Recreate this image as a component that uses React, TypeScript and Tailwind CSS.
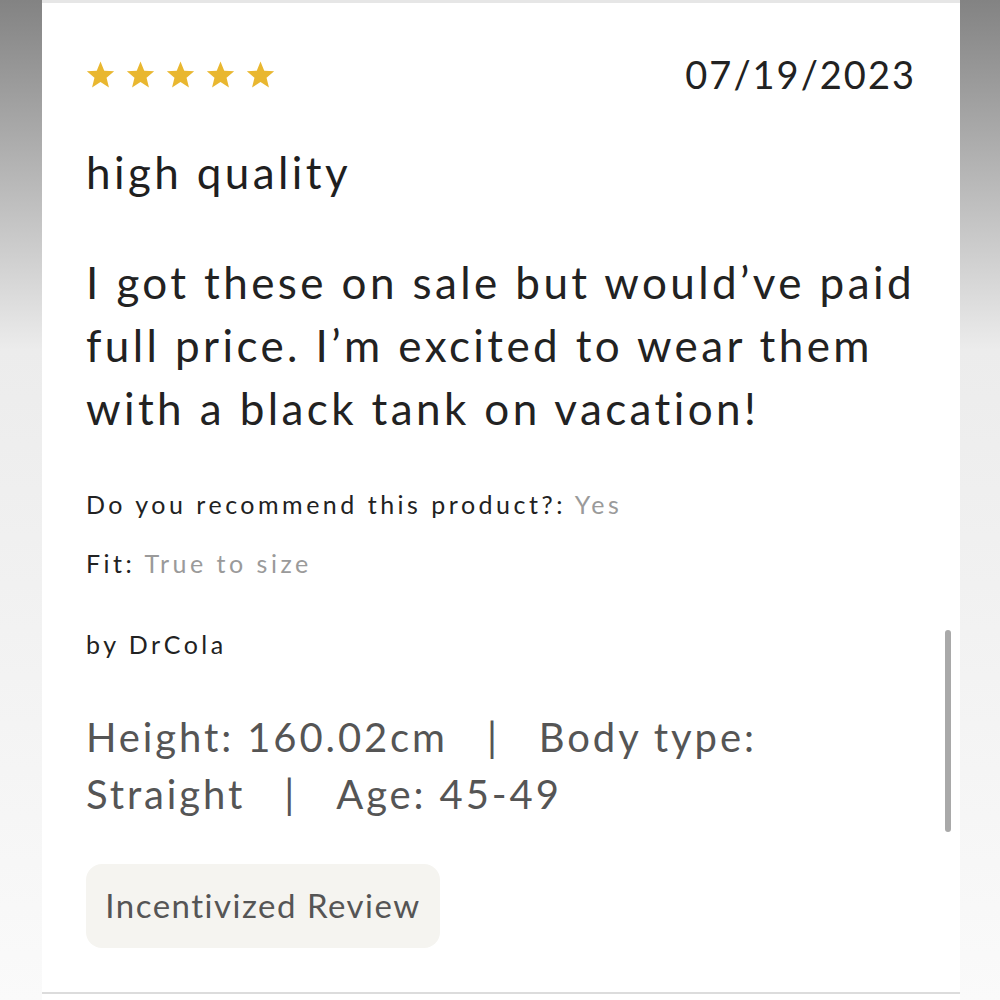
const font = { fontFamily: "Lato, 'Noto Sans', sans-serif" }

function StarIcon() {
    return (
        <svg viewBox="0 0 24 24" className="h-[29px] w-[29px]">
            <path
                d="M12 1.2l3.1 7.6 8.2.6-6.3 5.3 2 8-7-4.4-7 4.4 2-8L.7 9.4l8.2-.6z"
                fill="#e9b730"
            />
        </svg>
    )
}

function Stars({ count }: { count: number }) {
    return (
        <div className="flex items-center gap-[11px]">
            {Array.from({ length: count }).map((_, i) => (
                <StarIcon key={i} />
            ))}
        </div>
    )
}

function Sep() {
    return <span className="mx-[39px]">|</span>
}

export default function App() {
    return (
        <div className="flex h-[1000px] w-[1000px] bg-[#fafafa]" style={font}>
            <div className="w-[42px] bg-gradient-to-b from-[#838383] via-[#ececec] via-35% to-[#fafafa]" />
            <div className="relative flex flex-1 flex-col border-t-[3px] border-[#e6e6e6] bg-white">
                <div className="flex flex-col px-[44px] pb-[44px]">
                    <div className="mt-[43px] flex items-center justify-between">
                        <Stars count={5} />
                        <span className="text-[38px] tracking-[2px] text-[#222]">07/19/2023</span>
                    </div>
                    <h2 className="mt-[41px] text-[44px] leading-[56px] tracking-[3.4px] text-[#1f1f1f]">high quality</h2>
                    <p className="mt-[51px] text-[44px] leading-[63px] tracking-[3.4px] text-[#222]">
                        I got these on sale but would’ve paid full price. I’m excited to wear them with a black tank on vacation!
                    </p>
                    <div className="mt-[49px] text-[25px] leading-[30px] tracking-[3.5px] text-[#222]">
                        Do you recommend this product?: <span className="text-[#9a9a9a]">Yes</span>
                    </div>
                    <div className="mt-[29px] text-[25px] leading-[30px] tracking-[3.5px] text-[#222]">
                        Fit: <span className="text-[#9a9a9a]">True to size</span>
                    </div>
                    <div className="mt-[51px] text-[25px] leading-[30px] tracking-[3.5px] text-[#222]">by DrCola</div>
                    <div className="mt-[50px] flex w-[720px] flex-wrap items-baseline text-[40px] leading-[57px] tracking-[2.9px] text-[#555]">
                        <span>Height: 160.02cm</span>
                        <Sep />
                        <span className="mr-[16px]">Body type:</span>
                        <span>Straight</span>
                        <Sep />
                        <span>Age: 45-49</span>
                    </div>
                    <div className="mt-[41px] flex h-[84px] w-[354px] items-center justify-center rounded-[16px] bg-[#f5f4f0] text-[33px] tracking-[1.5px] text-[#555]">
                        Incentivized Review
                    </div>
                </div>
                <div className="mt-auto mb-[6px] h-[2px] bg-[#dcdcdc]" />
                {/* scroll indicator */}
                <div className="absolute left-[903px] top-[627px] h-[202px] w-[6px] rounded-full bg-[#a9a9a9]" />
            </div>
            <div className="w-[40px] bg-gradient-to-b from-[#838383] via-[#ececec] via-35% to-[#fafafa]" />
        </div>
    )
}
